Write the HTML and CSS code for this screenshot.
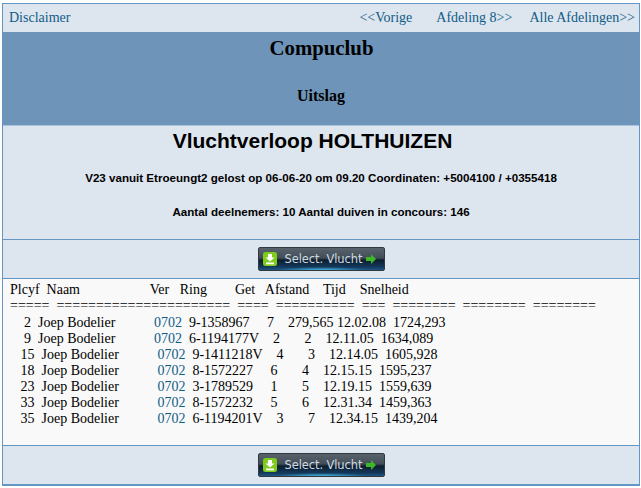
FILE: index.html
```html
<!DOCTYPE html>
<html lang="nl">
<head>
<meta charset="utf-8">
<title>Vluchtverloop HOLTHUIZEN</title>
<link rel="stylesheet" href="styles.css">
</head>
<body>
<main class="panel">
  <nav class="nav">
    <a href="#">Disclaimer</a>
    <div class="nav-right">
      <a href="#">&lt;&lt;Vorige</a>
      <a href="#">Afdeling 8&gt;&gt;</a>
      <a class="nav-all" href="#">Alle Afdelingen&gt;&gt;</a>
    </div>
  </nav>
  <header class="banner">
    <h1>Compuclub</h1>
    <h2>Uitslag</h2>
  </header>
  <section class="info">
    <h3>Vluchtverloop HOLTHUIZEN</h3>
    <p class="line-first">V23 vanuit Etroeungt2 gelost op 06-06-20 om 09.20 Coordinaten: +5004100 / +0355418</p>
    <p class="line-second">Aantal deelnemers: 10 Aantal duiven in concours: 146</p>
  </section>
  <div class="actions">
    <button class="select" type="button">
      <svg class="ico" width="14" height="14" viewBox="0 0 14 14"><rect width="14" height="14" rx="2.5" fill="#7ecb1c"/><path d="M5 2h4v3.5h2.5L7 9.5 2.500 5.500H5z" fill="#fff"/><rect x="3" y="10.500" width="8" height="1.800" fill="#fff"/></svg>
      <span>Select. Vlucht</span>
      <svg class="arr" width="10" height="10" viewBox="0 0 10 10"><path d="M0 3h5V0l5 5-5 5V7H0z" fill="#3fb52a"/></svg>
    </button>
  </div>
  <div class="results">
    <pre class="head">Plcyf  Naam                    Ver   Ring        Get   Afstand    Tijd    Snelheid
=====  ======================  ====  ==========  ===  ========  ========  ========</pre>
    <pre class="rows">    2  Joep Bodelier           <a href="#">0702</a>  9-1358967     7    279,565 12.02.08  1724,293
    9  Joep Bodelier           <a href="#">0702</a>  6-1194177V    2       2    12.11.05  1634,089
   15  Joep Bodelier           <a href="#">0702</a>  9-1411218V    4       3    12.14.05  1605,928
   18  Joep Bodelier           <a href="#">0702</a>  8-1572227     6       4    12.15.15  1595,237
   23  Joep Bodelier           <a href="#">0702</a>  3-1789529     1       5    12.19.15  1559,639
   33  Joep Bodelier           <a href="#">0702</a>  8-1572232     5       6    12.31.34  1459,363
   35  Joep Bodelier           <a href="#">0702</a>  6-1194201V    3       7    12.34.15  1439,204</pre>
  </div>
  <div class="actions actions-last">
    <button class="select" type="button">
      <svg class="ico" width="14" height="14" viewBox="0 0 14 14"><rect width="14" height="14" rx="2.5" fill="#7ecb1c"/><path d="M5 2h4v3.5h2.5L7 9.5 2.500 5.500H5z" fill="#fff"/><rect x="3" y="10.500" width="8" height="1.800" fill="#fff"/></svg>
      <span>Select. Vlucht</span>
      <svg class="arr" width="10" height="10" viewBox="0 0 10 10"><path d="M0 3h5V0l5 5-5 5V7H0z" fill="#3fb52a"/></svg>
    </button>
  </div>
</main>
</body>
</html>
```
FILE: styles.css
```css
html, body { margin: 0; padding: 0; background: #fff; }
body { padding: 3px 1px 0 2px; font-family: "Liberation Serif", serif; font-size: 14px; color: #000; }
a { color: #0f5c87; text-decoration: none; }
.panel { border: 1px solid #6496c4; border-bottom-width: 2px; background: #dde5ef; height: 483px; box-sizing: border-box; display: flex; flex-direction: column; }
.nav { height: 28px; flex: none; display: flex; justify-content: space-between; align-items: center; padding: 0 4px 0 6px; }
.nav-right { display: flex; gap: 24px; }
.nav-all { margin-left: -7px; }
.banner { background: #6e94b9; height: 93px; flex: none; box-sizing: border-box; text-align: center; padding-top: 4px; }
.banner h1 { margin: 0; padding-left: 1px; font-size: 20.800px; line-height: 23px; font-weight: bold; }
.banner h2 { margin: 28px 0 0; font-size: 16px; line-height: 18px; font-weight: bold; }
.info { height: 115px; flex: none; box-sizing: border-box; text-align: center; border-top: 1px solid #a9c4df; border-bottom: 1px solid #6496c4; font-family: "Liberation Sans", sans-serif; padding-top: 3px; }
.info h3 { margin: 0; padding-right: 17px; font-size: 21px; line-height: 23px; font-weight: bold; }
.info p { margin: 0; font-size: 11.600px; line-height: 14px; font-weight: bold; }
.line-first { padding-top: 19px; }
.line-second { padding-top: 20px; }
.actions { height: 39px; flex: none; box-sizing: border-box; display: flex; align-items: center; justify-content: center; border-bottom: 1px solid #6496c4; }
.actions-last { border-bottom: 0; border-top: 1px solid #6496c4; }
.select { width: 127px; height: 24px; padding: 0 0 0 4px; display: flex; align-items: center; border: 1px solid #33383d; border-radius: 2px; background: radial-gradient(ellipse 45px 3px at 50% 100%, #43b4dc 0, rgba(67, 180, 220, 0) 100%), linear-gradient(#57626c 0, #434e58 45%, #0d1e2d 55%, #14375a 85%, #1d5684 100%); color: #cddae3; font-family: "DejaVu Sans", sans-serif; font-size: 11.500px; white-space: nowrap; }
.ico { flex: none; }
.select span { margin-left: 8px; letter-spacing: -0.100px; }
.arr { flex: none; margin-left: 4px; }
.results { flex: 1; background: #f9f9f9; padding-top: 3px; }
.results pre { margin: 0; font-family: "Liberation Serif", serif; font-size: 14px; line-height: 16px; }
.head { padding: 0 0 1px 7px; }
.rows { padding-left: 7px; }
```
